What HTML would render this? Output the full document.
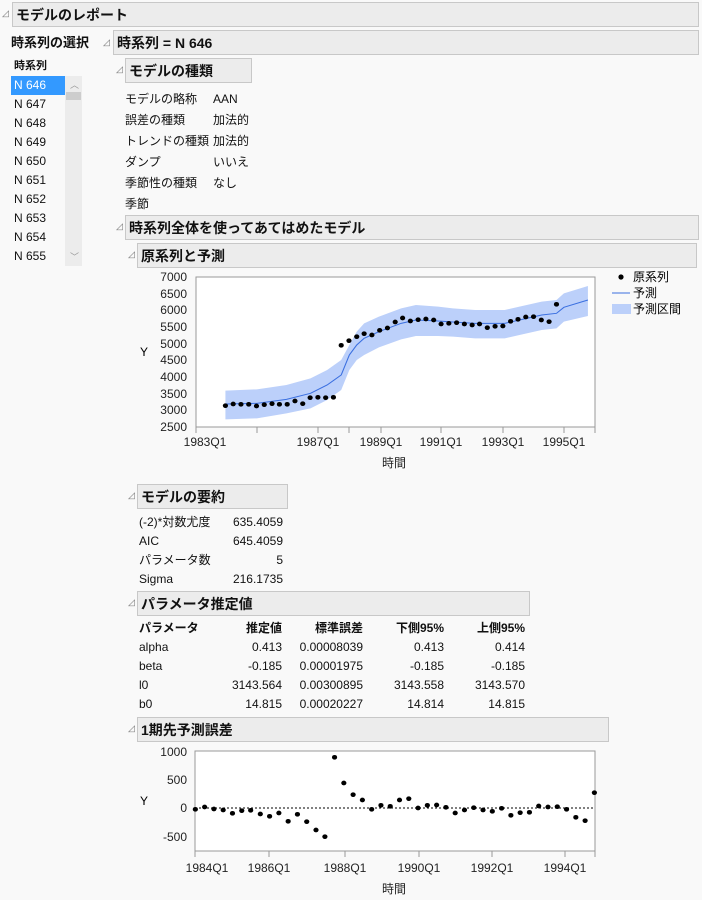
<!DOCTYPE html><html><head><meta charset="utf-8"><style>
body{margin:0;width:702px;height:900px;background:#f9f9f9;font-family:"Liberation Sans","Noto Sans CJK JP",sans-serif;font-size:12px;color:#111;position:relative;overflow:hidden}
.a{position:absolute;white-space:nowrap}
.h{position:absolute;background:#ececec;border:1px solid #c8c8c8;font-weight:bold;font-size:14px;box-sizing:border-box;padding:2px 0 0 3px;height:25px}
.tri{position:absolute;font-size:9px;color:#777}
.r{text-align:right}
</style></head><body>
<span class="tri" style="left:2px;top:8px">◿</span><div class="h" style="left:12px;top:2px;width:687px">モデルのレポート</div>
<div class="a" style="left:11px;top:32px;font-weight:bold;font-size:13px">時系列の選択</div>
<div class="a" style="left:14px;top:57px;font-weight:bold;font-size:11px">時系列</div>
<div class="a" style="left:11px;top:76px;width:54px;height:19px;background:#3399ff"></div>
<div class="a" style="left:65px;top:76px;width:17px;height:190px;background:#ececec"></div>
<div class="a" style="left:66px;top:92px;width:15px;height:8px;background:#cdcdcd"></div>
<div class="a" style="left:70px;top:78px;font-size:9px;color:#999">︿</div>
<div class="a" style="left:70px;top:250px;font-size:9px;color:#999">﹀</div>
<div class="a" style="left:14px;top:78px;color:#fff">N 646</div>
<div class="a" style="left:14px;top:97px">N 647</div>
<div class="a" style="left:14px;top:116px">N 648</div>
<div class="a" style="left:14px;top:135px">N 649</div>
<div class="a" style="left:14px;top:154px">N 650</div>
<div class="a" style="left:14px;top:173px">N 651</div>
<div class="a" style="left:14px;top:192px">N 652</div>
<div class="a" style="left:14px;top:211px">N 653</div>
<div class="a" style="left:14px;top:230px">N 654</div>
<div class="a" style="left:14px;top:249px">N 655</div>

<span class="tri" style="left:103px;top:37px">◿</span><div class="h" style="left:113px;top:30px;width:586px">時系列 = N 646</div>
<span class="tri" style="left:116px;top:64px">◿</span><div class="h" style="left:125px;top:58px;width:127px">モデルの種類</div>
<div class="a" style="left:125px;top:89px;line-height:21px">モデルの略称<br>誤差の種類<br>トレンドの種類<br>ダンプ<br>季節性の種類<br>季節</div>
<div class="a" style="left:213px;top:89px;line-height:21px">AAN<br>加法的<br>加法的<br>いいえ<br>なし</div>
<span class="tri" style="left:116px;top:221px">◿</span><div class="h" style="left:125px;top:215px;width:574px">時系列全体を使ってあてはめたモデル</div>
<span class="tri" style="left:128px;top:249px">◿</span><div class="h" style="left:137px;top:243px;width:560px">原系列と予測</div>

<svg class="a" style="left:0;top:0" width="702" height="900" font-family="Liberation Sans, Noto Sans CJK JP, sans-serif" font-size="12">
<rect x="196" y="277" width="399" height="150" fill="#fff" stroke="#999"/>
<g transform="translate(120,260) scale(0.3699,0.33333)">
<polygon fill="#bcd0fa" points="285,392 370,388 450,375 515,355 560,330 598,300 620,255 640,215 660,190 700,170 760,145 800,135 860,140 900,145 960,150 1040,150 1080,140 1140,125 1180,120 1200,100 1265,78 1265,168 1200,185 1180,205 1140,210 1080,225 1040,235 960,235 900,230 860,228 800,228 760,238 700,262 660,285 640,300 620,330 598,390 560,420 515,445 450,460 370,475 285,478"/>
<polyline fill="none" stroke="#3a6fe0" stroke-width="3" points="285,432 370,430 450,418 515,400 560,375 598,345 620,285 640,255 660,235 700,215 760,190 800,180 860,183 900,186 960,190 1040,190 1080,180 1140,165 1180,160 1200,142 1265,120"/>
<g fill="#000">
<circle cx="285" cy="437" r="7"/><circle cx="306" cy="432" r="7"/><circle cx="327" cy="433" r="7"/><circle cx="348" cy="433" r="7"/><circle cx="369" cy="438" r="7"/><circle cx="390" cy="434" r="7"/><circle cx="411" cy="431" r="7"/><circle cx="431" cy="433" r="7"/><circle cx="452" cy="433" r="7"/><circle cx="473" cy="423" r="7"/><circle cx="494" cy="431" r="7"/><circle cx="514" cy="413" r="7"/><circle cx="535" cy="412" r="7"/><circle cx="556" cy="413" r="7"/><circle cx="577" cy="412" r="7"/>
<circle cx="598" cy="256" r="7"/><circle cx="619" cy="242" r="7"/><circle cx="640" cy="230" r="7"/><circle cx="660" cy="221" r="7"/><circle cx="681" cy="225" r="7"/><circle cx="702" cy="211" r="7"/><circle cx="723" cy="204" r="7"/><circle cx="744" cy="186" r="7"/><circle cx="764" cy="174" r="7"/><circle cx="785" cy="183" r="7"/><circle cx="806" cy="179" r="7"/><circle cx="827" cy="177" r="7"/><circle cx="848" cy="180" r="7"/><circle cx="868" cy="192" r="7"/><circle cx="889" cy="190" r="7"/><circle cx="910" cy="188" r="7"/><circle cx="931" cy="192" r="7"/><circle cx="952" cy="195" r="7"/><circle cx="972" cy="192" r="7"/><circle cx="993" cy="203" r="7"/><circle cx="1014" cy="199" r="7"/><circle cx="1035" cy="198" r="7"/><circle cx="1056" cy="184" r="7"/><circle cx="1076" cy="178" r="7"/><circle cx="1097" cy="171" r="7"/><circle cx="1118" cy="170" r="7"/><circle cx="1139" cy="180" r="7"/><circle cx="1160" cy="185" r="7"/><circle cx="1180" cy="133" r="7"/>
</g></g>
<g text-anchor="end" fill="#222"><text x="187" y="281">7000</text><text x="187" y="298">6500</text><text x="187" y="314">6000</text><text x="187" y="331">5500</text><text x="187" y="348">5000</text><text x="187" y="364">4500</text><text x="187" y="381">4000</text><text x="187" y="398">3500</text><text x="187" y="414">3000</text><text x="187" y="431">2500</text></g>
<text x="140" y="356">Y</text>
<g stroke="#999"><line x1="196" y1="427" x2="196" y2="433"/><line x1="257" y1="427" x2="257" y2="433"/><line x1="318" y1="427" x2="318" y2="433"/><line x1="349" y1="427" x2="349" y2="433"/><line x1="381" y1="427" x2="381" y2="433"/><line x1="441" y1="427" x2="441" y2="433"/><line x1="503" y1="427" x2="503" y2="433"/><line x1="564" y1="427" x2="564" y2="433"/><line x1="595" y1="427" x2="595" y2="433"/></g>
<g text-anchor="middle" fill="#222"><text x="205" y="446">1983Q1</text><text x="318" y="446">1987Q1</text><text x="381" y="446">1989Q1</text><text x="441" y="446">1991Q1</text><text x="503" y="446">1993Q1</text><text x="564" y="446">1995Q1</text><text x="394" y="467">時間</text></g>
<circle cx="621" cy="277" r="2.6"/><text x="633" y="281">原系列</text>
<line x1="612" y1="293" x2="630" y2="293" stroke="#3a6fe0"/><text x="633" y="297">予測</text>
<rect x="612" y="304" width="19" height="10" fill="#bcd0fa"/><text x="633" y="313">予測区間</text>

<rect x="195" y="751" width="400" height="100" fill="#fff" stroke="#999"/>
<line x1="195" y1="808" x2="595" y2="808" stroke="#000" stroke-dasharray="2,2"/>
<g stroke="#999"><line x1="195" y1="851" x2="195" y2="857"/><line x1="269" y1="851" x2="269" y2="857"/><line x1="345" y1="851" x2="345" y2="857"/><line x1="419" y1="851" x2="419" y2="857"/><line x1="492" y1="851" x2="492" y2="857"/><line x1="565" y1="851" x2="565" y2="857"/><line x1="595" y1="851" x2="595" y2="857"/></g>
<g transform="translate(120,720) scale(0.3712,0.33333)" fill="#000">
<circle cx="203" cy="268" r="7"/><circle cx="228" cy="261" r="7"/><circle cx="253" cy="267" r="7"/><circle cx="278" cy="270" r="7"/><circle cx="303" cy="280" r="7"/><circle cx="328" cy="272" r="7"/><circle cx="352" cy="271" r="7"/><circle cx="378" cy="282" r="7"/><circle cx="403" cy="289" r="7"/><circle cx="428" cy="279" r="7"/><circle cx="453" cy="304" r="7"/><circle cx="478" cy="283" r="7"/><circle cx="503" cy="305" r="7"/><circle cx="528" cy="330" r="7"/><circle cx="552" cy="350" r="7"/><circle cx="578" cy="112" r="7"/><circle cx="603" cy="189" r="7"/><circle cx="628" cy="224" r="7"/><circle cx="653" cy="240" r="7"/><circle cx="678" cy="268" r="7"/><circle cx="703" cy="256" r="7"/><circle cx="728" cy="259" r="7"/><circle cx="753" cy="240" r="7"/><circle cx="778" cy="236" r="7"/><circle cx="803" cy="264" r="7"/><circle cx="828" cy="256" r="7"/><circle cx="853" cy="255" r="7"/><circle cx="878" cy="262" r="7"/><circle cx="903" cy="279" r="7"/><circle cx="928" cy="270" r="7"/><circle cx="953" cy="263" r="7"/><circle cx="978" cy="270" r="7"/><circle cx="1003" cy="274" r="7"/><circle cx="1028" cy="265" r="7"/><circle cx="1053" cy="286" r="7"/><circle cx="1078" cy="278" r="7"/><circle cx="1103" cy="277" r="7"/><circle cx="1128" cy="258" r="7"/><circle cx="1153" cy="261" r="7"/><circle cx="1178" cy="260" r="7"/><circle cx="1203" cy="268" r="7"/><circle cx="1228" cy="292" r="7"/><circle cx="1253" cy="302" r="7"/><circle cx="1278" cy="218" r="7"/>
</g>
<g text-anchor="end" fill="#222"><text x="187" y="756">1000</text><text x="187" y="784">500</text><text x="187" y="812">0</text><text x="187" y="841">-500</text></g>
<text x="140" y="805">Y</text>
<g text-anchor="middle" fill="#222"><text x="207" y="872">1984Q1</text><text x="269" y="872">1986Q1</text><text x="345" y="872">1988Q1</text><text x="419" y="872">1990Q1</text><text x="492" y="872">1992Q1</text><text x="565" y="872">1994Q1</text><text x="394" y="893">時間</text></g>
</svg>

<span class="tri" style="left:128px;top:490px">◿</span><div class="h" style="left:137px;top:484px;width:151px">モデルの要約</div>
<div class="a" style="left:139px;top:513px;line-height:19px">(-2)*対数尤度<br>AIC<br>パラメータ数<br>Sigma</div>
<div class="a r" style="left:220px;top:513px;width:63px;line-height:19px">635.4059<br>645.4059<br>5<br>216.1735</div>
<span class="tri" style="left:128px;top:597px">◿</span><div class="h" style="left:137px;top:591px;width:393px">パラメータ推定値</div>
<div class="a" style="left:139px;top:619px;line-height:19px"><b>パラメータ</b><br>alpha<br>beta<br>l0<br>b0</div>
<div class="a r" style="left:220px;top:619px;width:62px;line-height:19px"><b>推定値</b><br>0.413<br>-0.185<br>3143.564<br>14.815</div>
<div class="a r" style="left:290px;top:619px;width:73px;line-height:19px"><b>標準誤差</b><br>0.00008039<br>0.00001975<br>0.00300895<br>0.00020227</div>
<div class="a r" style="left:380px;top:619px;width:64px;line-height:19px"><b>下側95%</b><br>0.413<br>-0.185<br>3143.558<br>14.814</div>
<div class="a r" style="left:460px;top:619px;width:65px;line-height:19px"><b>上側95%</b><br>0.414<br>-0.185<br>3143.570<br>14.815</div>
<span class="tri" style="left:128px;top:723px">◿</span><div class="h" style="left:137px;top:717px;width:472px">1期先予測誤差</div>
</body></html>
